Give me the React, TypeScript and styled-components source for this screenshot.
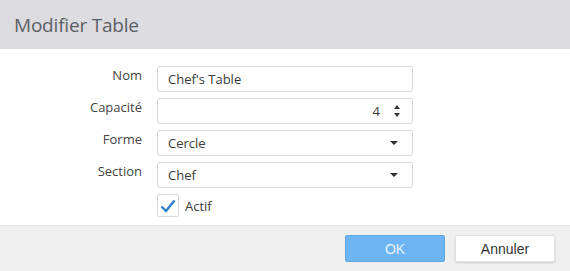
import styled, { createGlobalStyle } from 'styled-components';

const GlobalStyle = createGlobalStyle`
  html, body {
    margin: 0;
    padding: 0;
    background: #ffffff;
  }
  body {
    font-family: "Open Sans", "Noto Sans", sans-serif;
  }
`;

const Dialog = styled.div`
  width: 570px;
  height: 271px;
  display: flex;
  flex-direction: column;
  background: #ffffff;
`;

const Header = styled.div`
  height: 49px;
  background: #dcdbe0;
  display: flex;
  align-items: center;
  padding: 0 14px;
  box-sizing: border-box;
`;

const Title = styled.h2`
  margin: 0;
  font-weight: 400;
  font-size: 19px;
  letter-spacing: -0.2px;
  color: #5b5f66;
`;

const Body = styled.div`
  flex: 1;
  display: flex;
  flex-direction: column;
  gap: 6px;
  padding: 17px 0 0 0;
`;

const Row = styled.div`
  display: grid;
  grid-template-columns: 142px 256px;
  column-gap: 15px;
  align-items: center;
`;

const Label = styled.label`
  text-align: right;
  font-size: 13px;
  color: #444444;
  line-height: 1;
  margin-top: -8px;
`;

const Field = styled.div<{ $align?: 'left' | 'right' }>`
  height: 26px;
  box-sizing: border-box;
  border: 1px solid #d9d9d9;
  border-radius: 3px;
  display: flex;
  align-items: center;
  justify-content: ${(p) => (p.$align === 'right' ? 'flex-end' : 'space-between')};
  padding: 0 10px 0 10px;
  font-size: 13px;
  color: #3a3a3a;
  background: #ffffff;
`;

const Caret = styled.span`
  width: 0;
  height: 0;
  border-left: 4px solid transparent;
  border-right: 4px solid transparent;
  border-top: 4px solid #333333;
  margin-right: 4px;
`;

const Spinner = styled.div`
  display: flex;
  flex-direction: column;
  gap: 4px;
  margin-left: 14px;
  margin-right: 2px;
`;

const Arrow = styled.span<{ $up?: boolean }>`
  width: 0;
  height: 0;
  border-left: 3.5px solid transparent;
  border-right: 3.5px solid transparent;
  ${(p) => (p.$up ? 'border-bottom: 4px solid #333;' : 'border-top: 4px solid #333;')}
`;

const CheckRow = styled.div`
  display: flex;
  align-items: center;
  gap: 6px;
  margin-left: 157px;
`;

const Box = styled.span`
  width: 22px;
  height: 23px;
  box-sizing: border-box;
  border: 1px solid #d9d9d9;
  border-radius: 2px;
  display: flex;
  align-items: center;
  justify-content: center;
`;

const CheckLabel = styled.span`
  font-size: 13px;
  color: #3a3a3a;
`;

const Footer = styled.div`
  height: 46px;
  background: #efefef;
  border-top: 1px solid #e6e6e6;
  display: flex;
  justify-content: flex-end;
  align-items: center;
  gap: 10px;
  padding: 0 15px 0 0;
  box-sizing: border-box;
`;

const Button = styled.button<{ $primary?: boolean }>`
  width: 100px;
  height: 27px;
  font-family: "Liberation Sans", Arial, sans-serif;
  font-size: 14px;
  border-radius: 2px;
  cursor: pointer;
  border: 1px solid ${(p) => (p.$primary ? '#5ea8e6' : '#e2e2e2')};
  background: ${(p) => (p.$primary ? '#6cb4f3' : '#ffffff')};
  color: ${(p) => (p.$primary ? '#e8f3fd' : '#333333')};
  box-shadow: ${(p) => (p.$primary ? 'none' : '0 1px 2px rgba(0,0,0,0.15)')};
`;

const fields = [
  { label: 'Nom', value: "Chef's Table", kind: 'text' },
  { label: 'Capacité', value: '4', kind: 'number' },
  { label: 'Forme', value: 'Cercle', kind: 'select' },
  { label: 'Section', value: 'Chef', kind: 'select' },
];

const App = () => {
  return (
    <>
      <GlobalStyle />
      <Dialog>
        <Header>
          <Title>Modifier Table</Title>
        </Header>
        <Body>
          {fields.map((f) => (
            <Row key={f.label}>
              <Label>{f.label}</Label>
              {f.kind === 'number' ? (
                <Field $align="right">
                  <span>{f.value}</span>
                  <Spinner>
                    <Arrow $up />
                    <Arrow />
                  </Spinner>
                </Field>
              ) : (
                <Field>
                  <span>{f.value}</span>
                  {f.kind === 'select' && <Caret />}
                </Field>
              )}
            </Row>
          ))}
          <CheckRow>
            <Box>
              <svg width="16" height="14" viewBox="0 0 16 14">
                <path d="M1.5 7.5 L6 12 L14.5 1.5" fill="none" stroke="#2f7fc8" strokeWidth="2.4" />
              </svg>
            </Box>
            <CheckLabel>Actif</CheckLabel>
          </CheckRow>
        </Body>
        <Footer>
          <Button $primary>OK</Button>
          <Button>Annuler</Button>
        </Footer>
      </Dialog>
    </>
  );
};

export default App;
